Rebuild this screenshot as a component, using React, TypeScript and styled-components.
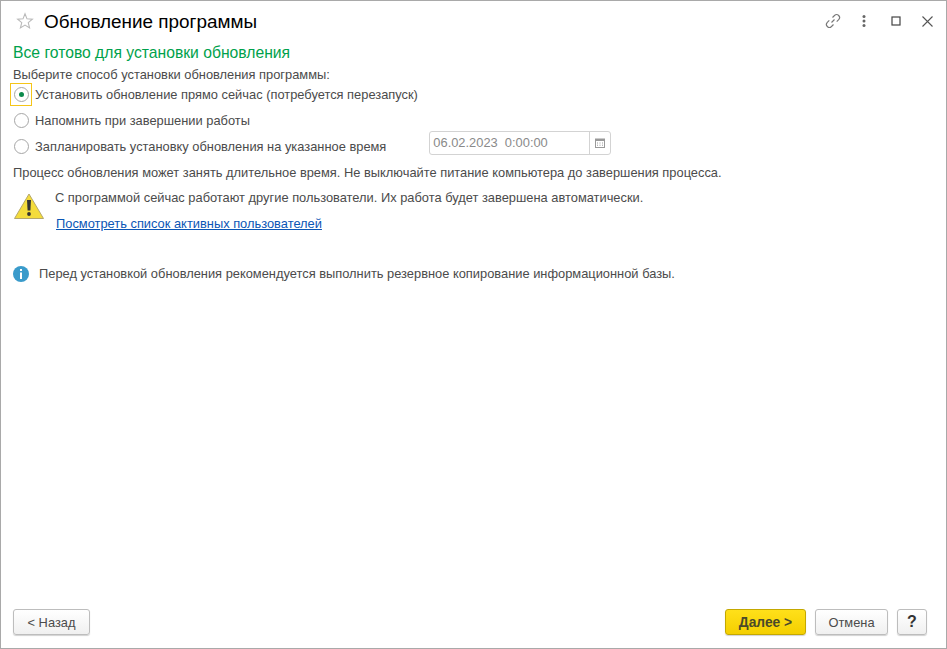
import React from 'react';
import styled, { createGlobalStyle } from 'styled-components';

const GlobalStyle = createGlobalStyle`
  html, body {
    margin: 0;
    padding: 0;
    background: #fff;
  }
  * {
    box-sizing: border-box;
  }
`;

export default function App() {
  return (
    <Win>
      <GlobalStyle />
      <TitleBar>
        <StarIcon viewBox="0 0 20 20">
          <path d="M10 2l2.200 5.600 6 .4-4.600 3.800 1.500 5.900L10 14.500l-5.100 3.200 1.500-5.900L1.800 8l6-.4z" fill="none" stroke="#b9b9b9" strokeWidth="1.200" />
        </StarIcon>
        <Title>Обновление программы</Title>
        <TitleTools>
          <ToolSlot>
            <svg viewBox="0 0 18 18" width="18" height="18">
              <path d="M7.500 10.500l3-3M8.500 5.500l2-2a3 3 0 0 1 4.200 0 3 3 0 0 1 0 4.200l-2 2M9.500 12.500l-2 2a3 3 0 0 1-4.200 0 3 3 0 0 1 0-4.200l2-2" fill="none" stroke="#777" strokeWidth="1.100" />
            </svg>
          </ToolSlot>
          <ToolSlot>
            <svg viewBox="0 0 4 12" width="4" height="12">
              <circle cx="2" cy="1.500" r="1.500" fill="#666" />
              <circle cx="2" cy="6" r="1.500" fill="#666" />
              <circle cx="2" cy="10.500" r="1.500" fill="#666" />
            </svg>
          </ToolSlot>
          <ToolSlot>
            <svg viewBox="0 0 10 10" width="10" height="10">
              <rect x="1" y="1" width="8" height="8" fill="none" stroke="#444" strokeWidth="1.200" />
            </svg>
          </ToolSlot>
          <ToolSlot>
            <svg viewBox="0 0 11 11" width="11" height="11">
              <path d="M.5.500l10 10M10.500.500l-10 10" fill="none" stroke="#555" strokeWidth="1.100" />
            </svg>
          </ToolSlot>
        </TitleTools>
      </TitleBar>

      <Content>
        <Heading>Все готово для установки обновления</Heading>
        <TextLine>Выберите способ установки обновления программы:</TextLine>
        <FirstRadioRow>
          <RadioBox $focused>
            <Radio $checked />
          </RadioBox>
          <RadioLabel>Установить обновление прямо сейчас (потребуется перезапуск)</RadioLabel>
        </FirstRadioRow>
        <RadioRow>
          <RadioBox>
            <Radio />
          </RadioBox>
          <RadioLabel>Напомнить при завершении работы</RadioLabel>
        </RadioRow>
        <RadioRow>
          <RadioBox>
            <Radio />
          </RadioBox>
          <RadioLabel>Запланировать установку обновления на указанное время</RadioLabel>
          <DateField>
            <DateValue>06.02.2023&nbsp;&nbsp;0:00:00</DateValue>
            <DateButton>
              <svg viewBox="0 0 10 10" width="10" height="10">
                <rect x="0.500" y="1" width="9" height="8.500" fill="none" stroke="#999" />
                <rect x="0.500" y="1" width="9" height="2" fill="#999" />
                <path d="M2 5h1M4.500 5h1M7 5h1M2 7.200h1M4.500 7.200h1M7 7.200h1" stroke="#999" />
              </svg>
            </DateButton>
          </DateField>
        </RadioRow>
        <ProcessLine>Процесс обновления может занять длительное время. Не выключайте питание компьютера до завершения процесса.</ProcessLine>

        <Notice>
          <WarningIcon viewBox="0 0 30 26" width="30" height="26">
            <path d="M15 1L29.500 25.500H.5z" fill="#f4dc3c" stroke="#b5a86a" strokeLinejoin="round" />
            <path d="M13 7h4l-.6 10.500h-2.800z" fill="#333" />
            <circle cx="15" cy="21" r="1.900" fill="#333" />
          </WarningIcon>
          <NoticeBody>
            <NoticeText>С программой сейчас работают другие пользователи. Их работа будет завершена автоматически.</NoticeText>
            <UsersLink href="#">Посмотреть список активных пользователей</UsersLink>
          </NoticeBody>
        </Notice>

        <InfoRow>
          <InfoIcon viewBox="0 0 16 16" width="16" height="16">
            <circle cx="8" cy="8" r="8" fill="#3a9bcb" />
            <rect x="7" y="3" width="2" height="2" fill="#fff" />
            <rect x="7" y="6.500" width="2" height="6.500" fill="#fff" />
          </InfoIcon>
          <TextLine>Перед установкой обновления рекомендуется выполнить резервное копирование информационной базы.</TextLine>
        </InfoRow>
      </Content>

      <Footer>
        <Button $width={77}>&lt; Назад</Button>
        <FooterRight>
          <PrimaryButton $width={81}>Далее &gt;</PrimaryButton>
          <Button $width={73}>Отмена</Button>
          <HelpButton $width={30}>?</HelpButton>
        </FooterRight>
      </Footer>
    </Win>
  );
}

const Win = styled.div`
  width: 947px;
  height: 649px;
  display: flex;
  flex-direction: column;
  border: 1px solid #a9a9a9;
  background: #fff;
  font-family: 'Liberation Sans', Arial, sans-serif;
  font-size: 12.87px;
  color: #4b4b4b;
  overflow: hidden;
`;

const TitleBar = styled.div`
  height: 42px;
  flex-shrink: 0;
  display: flex;
  align-items: center;
  padding: 0 3px 0 15px;
`;

const StarIcon = styled.svg`
  width: 18px;
  height: 18px;
  margin: -2px 10px 0 0;
`;

const Title = styled.div`
  font-size: 18.9px;
  color: #000;
`;

const TitleTools = styled.div`
  margin: -2px 0 0 auto;
  display: flex;
  align-items: center;
`;

const ToolSlot = styled.div`
  width: 31.5px;
  display: flex;
  align-items: center;
  justify-content: center;
`;

const Content = styled.div`
  flex: 1;
  display: flex;
  flex-direction: column;
  padding: 0 12px;
`;

const Heading = styled.div`
  height: 20px;
  line-height: 20px;
  font-size: 15.7px;
  color: #00a14b;
`;

const TextLine = styled.div`
  line-height: 16px;
  margin-top: 4px;
`;

const RadioRow = styled.div`
  display: flex;
  align-items: center;
  height: 26px;
`;

const FirstRadioRow = styled(RadioRow)`
  height: 24px;
  margin: -1px 0 1px;
`;

const RadioBox = styled.div<{ $focused?: boolean }>`
  width: 22px;
  height: 23px;
  margin-left: -3px;
  display: flex;
  align-items: center;
  justify-content: center;
  border: 1px solid ${(p) => (p.$focused ? '#f5c518' : 'transparent')};
`;

const Radio = styled.span<{ $checked?: boolean }>`
  width: 15px;
  height: 15px;
  border-radius: 50%;
  border: 1px solid #a6a6a6;
  background: #fff;
  display: flex;
  align-items: center;
  justify-content: center;
  &::after {
    content: '';
    display: ${(p) => (p.$checked ? 'block' : 'none')};
    width: 5px;
    height: 5px;
    border-radius: 50%;
    background: #0c8a4c;
  }
`;

const RadioLabel = styled.span`
  margin-left: 3px;
`;

const DateField = styled.div`
  align-self: flex-start;
  margin: -2px 0 0 43px;
  width: 182px;
  height: 24px;
  display: flex;
  border: 1px solid #d3d3d3;
  border-radius: 3px;
`;

const DateValue = styled.div`
  flex: 1;
  padding-left: 3px;
  line-height: 22px;
  color: #8a8a8a;
`;

const DateButton = styled.div`
  width: 21px;
  border-left: 1px solid #d3d3d3;
  display: flex;
  align-items: center;
  justify-content: center;
`;

const ProcessLine = styled.div`
  line-height: 16px;
  margin-top: 6px;
`;

const Notice = styled.div`
  display: flex;
  align-items: flex-start;
  margin-top: 9px;
  padding-left: 1px;
  gap: 11px;
`;

const WarningIcon = styled.svg`
  margin-top: 3px;
`;

const NoticeBody = styled.div`
  display: flex;
  flex-direction: column;
`;

const NoticeText = styled.div`
  line-height: 16px;
`;

const UsersLink = styled.a`
  margin-top: 10px;
  line-height: 16px;
  color: #0b56b5;
  text-decoration: underline;
  padding-left: 1px;
`;

const InfoRow = styled.div`
  display: flex;
  align-items: center;
  gap: 10px;
  margin-top: 30px;
`;

const InfoIcon = styled.svg`
  margin-top: 4px;
`;

const Footer = styled.div`
  height: 52px;
  flex-shrink: 0;
  display: flex;
  justify-content: space-between;
  align-items: flex-start;
  padding: 13px 19px 0 12px;
`;

const FooterRight = styled.div`
  display: flex;
  gap: 9px;
`;

const Button = styled.button<{ $width: number }>`
  width: ${(p) => p.$width}px;
  height: 26px;
  padding: 0;
  font-family: inherit;
  font-size: 12.87px;
  color: #4b4b4b;
  border: 1px solid #bdbdbd;
  border-radius: 3px;
  background: linear-gradient(#ffffff, #f0f0f0);
  box-shadow: 0 1px 1px rgba(0, 0, 0, 0.18);
`;

const PrimaryButton = styled(Button)`
  font-size: 13.8px;
  font-weight: 700;
  color: #4a4a2a;
  border-color: #c4a800;
  background: linear-gradient(#ffe01a, #f4cf00);
`;

const HelpButton = styled(Button)`
  font-size: 16px;
  font-weight: 700;
  color: #333;
`;
